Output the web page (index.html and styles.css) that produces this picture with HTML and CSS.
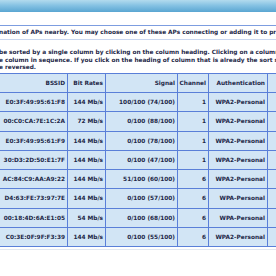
FILE: index.html
```html
<!DOCTYPE html>
<html>
<head>
<meta charset="utf-8">
<link rel="stylesheet" href="styles.css">
</head>
<body>
<div class="topbar"></div>
<div class="page">
  <div class="info">nation of APs nearby. You may choose one of these APs connecting or adding it to profile.</div>
  <div class="desc">
    <div class="line">be sorted by a single column by clicking on the column heading. Clicking on a column heading multiple times</div>
    <div class="line">e column in sequence. If you click on the heading of column that is already the sort sequence, the sort order will</div>
    <div class="line">e reversed.</div>
  </div>
  <div class="grid">
    <div class="th">BSSID</div><div class="th">Bit Rates</div><div class="th">Signal</div><div class="th">Channel</div><div class="th">Authentication</div><div class="th">Encryption</div>
    <div class="td">E0:3F:49:95:61:F8</div><div class="td">144 Mb/s</div><div class="td">100/100 (74/100)</div><div class="td">1</div><div class="td">WPA2-Personal</div><div class="td">AES</div>
    <div class="td">00:C0:CA:7E:1C:2A</div><div class="td">72 Mb/s</div><div class="td">0/100 (88/100)</div><div class="td">1</div><div class="td">WPA2-Personal</div><div class="td">AES</div>
    <div class="td">E0:3F:49:95:61:F9</div><div class="td">144 Mb/s</div><div class="td">0/100 (78/100)</div><div class="td">1</div><div class="td">WPA2-Personal</div><div class="td">AES</div>
    <div class="td">30:D3:2D:50:E1:7F</div><div class="td">144 Mb/s</div><div class="td">0/100 (47/100)</div><div class="td">1</div><div class="td">WPA2-Personal</div><div class="td">AES</div>
    <div class="td">AC:84:C9:AA:A9:22</div><div class="td">144 Mb/s</div><div class="td">51/100 (60/100)</div><div class="td">6</div><div class="td">WPA2-Personal</div><div class="td">AES</div>
    <div class="td">D4:63:FE:73:97:7E</div><div class="td">144 Mb/s</div><div class="td">0/100 (57/100)</div><div class="td">6</div><div class="td">WPA-Personal</div><div class="td">TKIP</div>
    <div class="td">00:18:4D:6A:E1:05</div><div class="td">54 Mb/s</div><div class="td">0/100 (68/100)</div><div class="td">6</div><div class="td">WPA-Personal</div><div class="td">TKIP</div>
    <div class="td">C0:3E:0F:9F:F3:39</div><div class="td">144 Mb/s</div><div class="td">0/100 (55/100)</div><div class="td">6</div><div class="td">WPA2-Personal</div><div class="td">AES</div>
  </div>
  <div class="under"></div>
</div>
</body>
</html>
```

FILE: styles.css
```css
html, body {
  margin: 0;
  padding: 0;
  background: #ffffff;
  overflow: hidden;
}
body {
  width: 276px;
  height: 276px;
  font-family: "DejaVu Sans", Verdana, sans-serif;
  font-weight: bold;
  font-size: 5.8px;
  color: #1d2747;
}
.topbar {
  height: 12px;
  background: linear-gradient(to bottom, #b3dbee 0%, #86c2e3 45%, #5aa6d2 100%);
}
.page {
  padding-top: 13px;
}
.info {
  border-top: 1px solid #7d9de0;
  border-bottom: 1px solid #c9d6ef;
  height: 13px;
  line-height: 13px;
  white-space: nowrap;
  overflow: hidden;
  margin-left: -1px;
}
.desc {
  margin-top: 9px;
  margin-left: -1px;
}
.line {
  height: 7.7px;
  line-height: 7.7px;
  white-space: nowrap;
  overflow: hidden;
}
.grid {
  margin-top: 1px;
  margin-left: -11px;
  display: grid;
  grid-template-columns: 77px 37px 71px 30px 58px 60px;
  grid-template-rows: 18px repeat(8, 18.25px);
  gap: 1px;
  background: #5a7fd8;
  border: 1px solid #5a7fd8;
  width: max-content;
}
.th, .td {
  background: #d2e5f5;
  padding-right: 2px;
  display: flex;
  align-items: center;
  justify-content: flex-end;
  white-space: nowrap;
}
.under {
  margin-top: 2px;
  height: 1px;
  background: #e3e8f0;
}
```
